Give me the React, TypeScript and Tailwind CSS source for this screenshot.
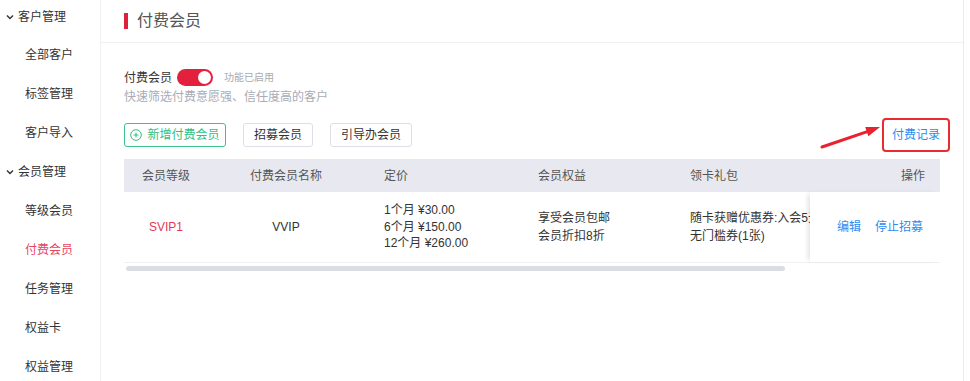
const FONT = { fontFamily: '"Liberation Sans", "Noto Sans CJK SC", sans-serif' };

type NavItem = { label: string; group?: boolean; active?: boolean };

const nav: NavItem[] = [
  { label: '客户管理', group: true },
  { label: '全部客户' },
  { label: '标签管理' },
  { label: '客户导入' },
  { label: '会员管理', group: true },
  { label: '等级会员' },
  { label: '付费会员', active: true },
  { label: '任务管理' },
  { label: '权益卡' },
  { label: '权益管理' },
];

function Chevron() {
  return (
    <svg width="8" height="8" viewBox="0 0 8 8" className="mr-[4px]">
      <path d="M1 2.5 L4 5.5 L7 2.5" fill="none" stroke="#333" strokeWidth="1.4" />
    </svg>
  );
}

function Sidebar() {
  return (
    <aside className="w-[101px] shrink-0 border-r border-[#f0f0f0] bg-white">
      {nav.map((item, i) => (
        <div
          key={item.label}
          className={`flex items-center text-[12px] ${i === 0 ? 'h-[33px]' : 'h-[39px]'} ${
            i === 1 ? 'mt-[2px]' : ''
          } ${item.group ? 'pl-[6px]' : 'pl-[25px]'} ${
            item.active ? 'text-[#e8465e]' : 'text-[#333]'
          }`}
        >
          {item.group && <Chevron />}
          {item.label}
        </div>
      ))}
    </aside>
  );
}

function Toggle() {
  return (
    <div className="relative h-[17px] w-[36px] rounded-full bg-[#e4213c]">
      <div className="absolute right-[2px] top-[2px] h-[13px] w-[13px] rounded-full bg-white" />
    </div>
  );
}

function PlusCircle() {
  return (
    <svg width="12" height="12" viewBox="0 0 12 12" className="mr-[5px]">
      <circle cx="6" cy="6" r="5.3" fill="none" stroke="#2fbf85" strokeWidth="1" />
      <path d="M6 3.5 V8.5 M3.5 6 H8.5" stroke="#2fbf85" strokeWidth="1" />
    </svg>
  );
}

// red annotation arrow pointing at the link
function Arrow() {
  return (
    <svg
      width="62"
      height="30"
      viewBox="0 0 62 30"
      className="pointer-events-none absolute left-[-72px] top-[-4px]"
    >
      <path d="M2 25 L48 9.3" stroke="#e8232f" strokeWidth="3" strokeLinecap="round" />
      <path d="M60 5 L45.2 4.9 L48.4 14.3 Z" fill="#e8232f" />
    </svg>
  );
}

function Table() {
  return (
    <div className="relative mt-[12px] w-[816px] text-[12px]">
      <div className="flex h-[33px] items-center bg-[#e8e9f0] text-[#555]">
        <div className="w-[84px] text-center">会员等级</div>
        <div className="w-[156px] text-center">付费会员名称</div>
        <div className="w-[154px] pl-[20px]">定价</div>
        <div className="w-[152px] pl-[20px]">会员权益</div>
        <div className="w-[140px] pl-[20px]">领卡礼包</div>
        <div className="flex-1 pr-[15px] text-right">操作</div>
      </div>
      <div className="flex h-[71px] items-center border-b border-[#f0f0f2] text-[#333]">
        <div className="w-[84px] text-center text-[#e23a56]">SVIP1</div>
        <div className="w-[156px] text-center">VVIP</div>
        <div className="w-[154px] pl-[20px] leading-[16.5px]">
          <div>1个月 ¥30.00</div>
          <div>6个月 ¥150.00</div>
          <div>12个月 ¥260.00</div>
        </div>
        <div className="w-[152px] pl-[20px] leading-[18px]">
          <div>享受会员包邮</div>
          <div>会员折扣8折</div>
        </div>
        <div className="w-[140px] overflow-hidden whitespace-nowrap pl-[20px] leading-[18px]">
          <div>随卡获赠优惠券:入会5元</div>
          <div>无门槛券(1张)</div>
        </div>
        <div className="flex h-full flex-1 items-center justify-end gap-[14px] bg-white pr-[17px] text-[#2d8cf0] shadow-[-4px_0_5px_-2px_rgba(0,0,0,0.12)]">
          <span>编辑</span>
          <span>停止招募</span>
        </div>
      </div>
      <div className="ml-[2px] mt-[3px] h-[5px] w-[659px] rounded-full bg-[#dcdce3]" />
    </div>
  );
}

export default function App() {
  return (
    <div className="flex h-[381px] w-[970px] overflow-hidden bg-white" style={FONT}>
      <Sidebar />
      <main className="w-[863px] shrink-0 border-r border-[#ececec]">
        <div className="flex h-[43px] items-center border-b border-[#f0f0f0] pl-[23px]">
          <div className="h-[16px] w-[4px] bg-[#e0203a]" />
          <span className="ml-[9px] text-[16px] text-[#555]">付费会员</span>
        </div>
        <div className="px-[23px] pt-[26px]">
          <div className="flex h-[17px] items-center">
            <span className="text-[12px] text-[#333]">付费会员</span>
            <div className="ml-[5px]">
              <Toggle />
            </div>
            <span className="ml-[11px] text-[10px] text-[#aaa]">功能已启用</span>
          </div>
          <div className="mt-[2px] text-[12px] leading-[18px] text-[#a9abb5]">
            快速筛选付费意愿强、信任度高的客户
          </div>
          <div className="mt-[17px] flex h-[24px] w-[816px] items-center justify-between">
            <div className="flex items-center gap-[17px] text-[12px]">
              <button className="flex h-[24px] w-[102px] items-center justify-center rounded-[3px] border border-[#3cc48f] text-[#2fbf85]">
                <PlusCircle />
                新增付费会员
              </button>
              <button className="h-[24px] w-[70px] rounded-[3px] border border-[#dcdfe6] text-[#333]">
                招募会员
              </button>
              <button className="h-[24px] w-[82px] rounded-[3px] border border-[#dcdfe6] text-[#333]">
                引导办会员
              </button>
            </div>
            <div className="relative leading-[18px] text-[12px] text-[#2d8cf0]">
              付费记录
              <div className="pointer-events-none absolute left-[-10px] top-[-8px] h-[34px] w-[68px] rounded-[4px] border-2 border-[#ea2b30]" />
              <Arrow />
            </div>
          </div>
          <Table />
        </div>
      </main>
    </div>
  );
}
